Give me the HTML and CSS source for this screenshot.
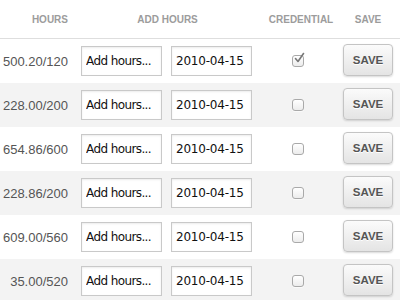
FILE: index.html
```html
<!DOCTYPE html>
<html lang="en">
<head>
  <meta charset="UTF-8" />
  <title>Hours</title>
  <link rel="stylesheet" href="styles.css">
</head>
<body>
  <div class="hours-table">
    <div class="row head">
      <div class="col-hours">Hours</div>
      <div class="col-add">Add Hours</div>
      <div class="col-cred">Credential</div>
      <div class="col-save">Save</div>
    </div>

    <div class="row">
      <div class="col-hours">500.20/120</div>
      <div class="col-add">
        <input class="field amount" type="text" value="Add hours...">
        <input class="field" type="text" value="2010-04-15">
      </div>
      <div class="col-cred">
        <span class="check checked">
          <svg width="14" height="14" viewBox="0 0 14 14"><path d="M3.5 6.5 L6 9.5 L11.5 1.5" fill="none" stroke="#777" stroke-width="1.6" stroke-linecap="round" stroke-linejoin="round"/></svg>
        </span>
      </div>
      <div class="col-save"><button>Save</button></div>
    </div>

    <div class="row">
      <div class="col-hours">228.00/200</div>
      <div class="col-add">
        <input class="field amount" type="text" value="Add hours...">
        <input class="field" type="text" value="2010-04-15">
      </div>
      <div class="col-cred"><span class="check"></span></div>
      <div class="col-save"><button>Save</button></div>
    </div>

    <div class="row">
      <div class="col-hours">654.86/600</div>
      <div class="col-add">
        <input class="field amount" type="text" value="Add hours...">
        <input class="field" type="text" value="2010-04-15">
      </div>
      <div class="col-cred"><span class="check"></span></div>
      <div class="col-save"><button>Save</button></div>
    </div>

    <div class="row">
      <div class="col-hours">228.86/200</div>
      <div class="col-add">
        <input class="field amount" type="text" value="Add hours...">
        <input class="field" type="text" value="2010-04-15">
      </div>
      <div class="col-cred"><span class="check"></span></div>
      <div class="col-save"><button>Save</button></div>
    </div>

    <div class="row">
      <div class="col-hours">609.00/560</div>
      <div class="col-add">
        <input class="field amount" type="text" value="Add hours...">
        <input class="field" type="text" value="2010-04-15">
      </div>
      <div class="col-cred"><span class="check"></span></div>
      <div class="col-save"><button>Save</button></div>
    </div>

    <div class="row">
      <div class="col-hours">35.00/520</div>
      <div class="col-add">
        <input class="field amount" type="text" value="Add hours...">
        <input class="field" type="text" value="2010-04-15">
      </div>
      <div class="col-cred"><span class="check"></span></div>
      <div class="col-save"><button>Save</button></div>
    </div>
  </div>
</body>
</html>
```

FILE: styles.css
```css
body {
  margin: 0;
  background: #fff;
  font-family: "Liberation Sans", Arial, sans-serif;
  color: #555;
}
.hours-table {
  width: 400px;
}
.row {
  display: grid;
  grid-template-columns: 69px 183px 91px 57px;
  align-items: center;
  height: 44px;
}
.row:nth-child(odd) {
  background: #f3f3f3;
}
.row.head {
  height: 38px;
  border-bottom: 1px solid #dedede;
  background: #fff;
  font-size: 10px;
  font-weight: bold;
  text-transform: uppercase;
  color: #9c9c9c;
}
.col-hours {
  text-align: right;
  padding-right: 1px;
  font-size: 13px;
}
.head .col-hours {
  font-size: 10px;
}
.col-add {
  display: flex;
  gap: 9px;
  padding-left: 12px;
}
.head .col-add {
  justify-content: center;
  padding-left: 14px;
}
.col-cred {
  display: flex;
  justify-content: center;
}
.head .col-cred {
  padding-left: 7px;
}
.head .col-save {
  width: 50px;
  text-align: center;
}
.field {
  box-sizing: border-box;
  width: 81px;
  height: 30px;
  margin: 0;
  padding: 0 4px;
  border: 1px solid #c9c9c9;
  box-shadow: inset 0 1px 2px rgba(0,0,0,0.08);
  font-family: "DejaVu Sans", sans-serif;
  font-size: 12px;
  letter-spacing: -0.2px;
  color: #111;
  background: #fff;
}
.field.amount {
  letter-spacing: -0.6px;
}
.check {
  box-sizing: border-box;
  position: relative;
  width: 12px;
  height: 12px;
  border: 1px solid #a9a9a9;
  border-radius: 3px;
  background: linear-gradient(#ffffff, #ececec);
  box-shadow: 0 1px 0 rgba(255,255,255,0.6);
}
.check svg {
  position: absolute;
  left: -1px;
  top: -4px;
}
button {
  box-sizing: border-box;
  width: 50px;
  height: 32px;
  margin-bottom: 2px;
  padding: 0;
  border: 1px solid #c4c4c4;
  border-radius: 4px;
  background: linear-gradient(#fbfbfb, #e4e4e4);
  box-shadow: 0 1px 2px rgba(0,0,0,0.15);
  font-family: "Liberation Sans", Arial, sans-serif;
  font-size: 11.5px;
  font-weight: bold;
  text-transform: uppercase;
  color: #555;
  text-shadow: 0 1px 0 #fff;
  cursor: pointer;
}
```
